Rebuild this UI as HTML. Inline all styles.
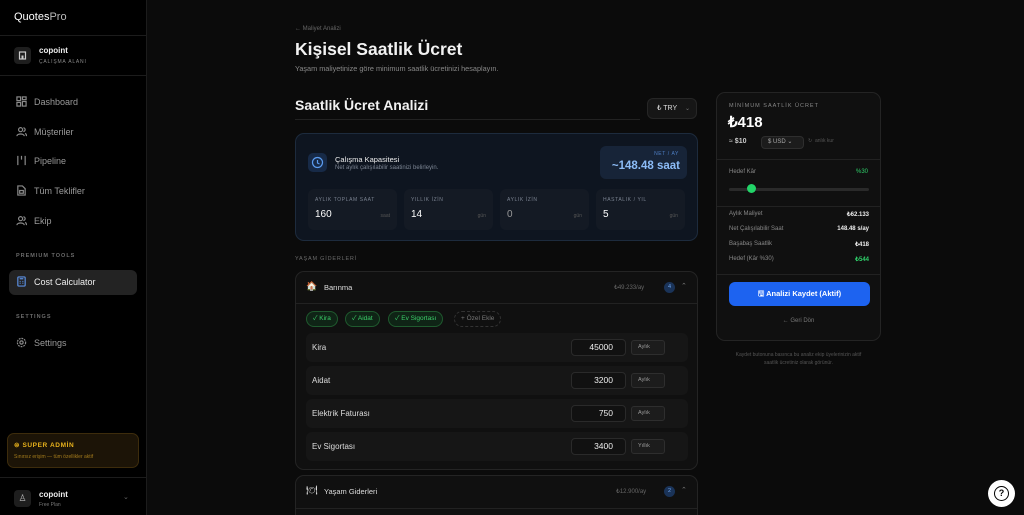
<!DOCTYPE html>
<html style="width:1024px;height:515px;overflow:hidden"><head><meta charset="utf-8"><style>
*{box-sizing:border-box;margin:0;padding:0}
body{width:1024px;height:515px;overflow:hidden;background:#0b0b0b;font-family:"Liberation Sans","Noto Sans CJK JP",sans-serif;color:#e5e5e5;position:relative}
.a{position:absolute}
.sb{left:0;top:0;width:147px;height:515px;background:#000;border-right:1px solid #1c1c1c}
.hr{position:absolute;height:1px;background:#1c1c1c}
.nav{position:absolute;left:16px;font-size:9px;color:#9a9a9a;display:flex;align-items:center}
.nav svg{width:11px;height:11px;margin-right:7px;stroke:#8a8a8a;fill:none;stroke-width:1.3}
.sec{position:absolute;left:16px;font-size:5.5px;letter-spacing:1px;color:#6a6a6a;font-weight:bold}
.card{position:absolute;border-radius:9px}
.lbl{font-size:5px;letter-spacing:.6px;color:#7a8290}
.box{position:absolute;top:55px;width:89px;height:41px;background:#141a24;border-radius:6px}
.row{position:absolute;left:10px;width:382px;height:29px;background:#161616;border-radius:6px;font-size:8px;color:#ddd}
.inp{position:absolute;left:265px;top:6px;width:55px;height:17px;border:1px solid #2a2a2a;background:#111;border-radius:4px;text-align:right;padding-right:12px;font-size:8.5px;line-height:15px;color:#eee}
.per{position:absolute;left:325px;top:7px;width:34px;height:15px;border:1px solid #2e2e2e;background:#1c1c1c;border-radius:3px;font-size:5.5px;color:#999;padding-left:6px;line-height:13px}
.chip{position:absolute;top:8px;height:16px;border:1px solid #1f5a2e;background:#0f2416;border-radius:8px;font-size:6.5px;color:#3ccf6a;line-height:14px;padding:0 6px}
.kv{position:absolute;left:12px;width:140px;font-size:6px;color:#888;display:flex;justify-content:space-between}
.kv b{color:#eee}
</style></head><body>
<div class="a sb">
 <div class="a" style="left:14px;top:11px;font-size:11px;color:#fff">Quotes<span style="color:#bbb">Pro</span></div>
 <div class="hr" style="left:0;top:35px;width:146px"></div>
 <div class="a" style="left:14px;top:47px;width:17px;height:17px;background:#1e1e1e;border-radius:4px"><svg width="17" height="17" viewBox="0 0 17 17"><rect x="5.5" y="5" width="6" height="7" fill="none" stroke="#ccc" stroke-width="1.2"/><rect x="7.5" y="8.5" width="2" height="3.5" fill="#ccc"/></svg></div>
 <div class="a" style="left:39px;top:46px;font-size:8px;color:#eee;font-weight:bold">copoint</div>
 <div class="a" style="left:39px;top:59px;font-size:5px;color:#888;letter-spacing:.8px">ÇALIŞMA ALANI</div>
 <div class="hr" style="left:0;top:75px;width:146px"></div>
 <div class="nav" style="top:96px"><svg viewBox="0 0 12 12"><rect x="1" y="1" width="4" height="4"/><rect x="7" y="1" width="4" height="3"/><rect x="1" y="7" width="4" height="4"/><rect x="7" y="6" width="4" height="5"/></svg>Dashboard</div>
 <div class="nav" style="top:126px"><svg viewBox="0 0 12 12"><circle cx="5" cy="4" r="2.2"/><path d="M1 11c0-3 8-3 8 0M8 2a2 2 0 010 4M10 8c1 .5 1.5 1.5 1.5 3"/></svg>Müşteriler</div>
 <div class="nav" style="top:155px"><svg viewBox="0 0 12 12"><path d="M2 1v10M6 1v4M10 1v10"/></svg>Pipeline</div>
 <div class="nav" style="top:185px"><svg viewBox="0 0 12 12"><path d="M2 1h5l3 3v7H2z"/><rect x="4" y="6" width="4" height="3"/></svg>Tüm Teklifler</div>
 <div class="nav" style="top:215px"><svg viewBox="0 0 12 12"><circle cx="5" cy="4" r="2.2"/><path d="M1 11c0-3 8-3 8 0M8 2a2 2 0 010 4M10 8c1 .5 1.5 1.5 1.5 3"/></svg>Ekip</div>
 <div class="sec" style="top:253px">PREMIUM TOOLS</div>
 <div class="a" style="left:9px;top:270px;width:128px;height:25px;background:#232323;border-radius:6px"></div>
 <div class="nav" style="top:276px;color:#eee"><svg viewBox="0 0 12 12" style="stroke:#5b8fe0"><rect x="2" y="1" width="8" height="10" rx="1"/><path d="M4 3h4M4 6h1M7 6h1M4 8h1M7 8h1"/></svg>Cost Calculator</div>
 <div class="sec" style="top:314px">SETTINGS</div>
 <div class="nav" style="top:337px"><svg viewBox="0 0 12 12"><circle cx="6" cy="6" r="1.8"/><circle cx="6" cy="6" r="4.5" stroke-dasharray="2 1"/></svg>Settings</div>
 <div class="a" style="left:7px;top:433px;width:132px;height:35px;background:#1c1407;border:1px solid #3d2c0c;border-radius:7px">
  <div class="a" style="left:6px;top:7px;font-size:6.5px;font-weight:bold;color:#e8b21c;letter-spacing:.6px">⊜ SUPER ADMİN</div>
  <div class="a" style="left:6px;top:20px;font-size:5px;color:#a37b1c">Sınırsız erişim — tüm özellikler aktif</div>
 </div>
 <div class="hr" style="left:0;top:477px;width:146px"></div>
 <div class="a" style="left:14px;top:490px;width:17px;height:17px;background:#1e1e1e;border-radius:4px;color:#bbb;font-size:9px;text-align:center;line-height:17px">♙</div>
 <div class="a" style="left:39px;top:490px;font-size:8px;color:#eee;font-weight:bold">copoint</div>
 <div class="a" style="left:39px;top:502px;font-size:5px;color:#777">Free Plan</div>
 <div class="a" style="left:123px;top:493px;font-size:7px;color:#666">⌄</div>
</div>

<div class="a" style="left:295px;top:26px;font-size:6px;color:#666">← Maliyet Analizi</div>
<div class="a" style="left:295px;top:39px;font-size:17.5px;font-weight:bold;color:#f2f2f2">Kişisel Saatlik Ücret</div>
<div class="a" style="left:295px;top:64px;font-size:7.3px;color:#888">Yaşam maliyetinize göre minimum saatlik ücretinizi hesaplayın.</div>
<div class="a" style="left:295px;top:97px;font-size:14px;font-weight:bold;color:#f2f2f2">Saatlik Ücret Analizi</div>
<div class="hr" style="left:295px;top:119px;width:345px;background:#222"></div>
<div class="a" style="left:647px;top:98px;width:50px;height:21px;background:#161616;border:1px solid #262626;border-radius:6px;font-size:7px;color:#ddd;line-height:19px;padding-left:9px">₺ TRY <span style="color:#777;margin-left:6px;font-size:6px">⌄</span></div>

<div class="card" style="left:295px;top:133px;width:403px;height:108px;background:#0e1520;border:1px solid #1d2b3d">
 <div class="a" style="left:12px;top:19px;width:19px;height:19px;background:#172a47;border-radius:5px"><svg width="19" height="19" viewBox="0 0 19 19"><circle cx="9.5" cy="9.5" r="5" fill="none" stroke="#5b9cf0" stroke-width="1.2"/><path d="M9.5 7v3l2 1" fill="none" stroke="#5b9cf0" stroke-width="1.2"/></svg></div>
 <div class="a" style="left:39px;top:21px;font-size:7.5px;color:#eee">Çalışma Kapasitesi</div>
 <div class="a" style="left:39px;top:31px;font-size:6px;color:#7c8593">Net aylık çalışılabilir saatinizi belirleyin.</div>
 <div class="a" style="left:304px;top:12px;width:87px;height:33px;background:#172438;border-radius:6px">
  <div class="a lbl" style="right:8px;top:5px;color:#4d7ec4">NET / AY</div>
  <div class="a" style="right:7px;top:14px;font-size:11.5px;font-weight:bold;color:#8cbcf7">~148.48 saat</div>
 </div>
 <div class="box" style="left:12px"><div class="a lbl" style="left:7px;top:8px">AYLIK TOPLAM SAAT</div><div class="a" style="left:7px;top:20px;font-size:10px;color:#fff">160</div><div class="a" style="right:7px;top:24px;font-size:5px;color:#555">saat</div></div>
 <div class="box" style="left:108px"><div class="a lbl" style="left:7px;top:8px">YILLIK İZİN</div><div class="a" style="left:7px;top:20px;font-size:10px;color:#fff">14</div><div class="a" style="right:7px;top:24px;font-size:5px;color:#555">gün</div></div>
 <div class="box" style="left:204px"><div class="a lbl" style="left:7px;top:8px">AYLIK İZİN</div><div class="a" style="left:7px;top:20px;font-size:10px;color:#999">0</div><div class="a" style="right:7px;top:24px;font-size:5px;color:#555">gün</div></div>
 <div class="box" style="left:300px"><div class="a lbl" style="left:7px;top:8px">HASTALIK / YIL</div><div class="a" style="left:7px;top:20px;font-size:10px;color:#fff">5</div><div class="a" style="right:7px;top:24px;font-size:5px;color:#555">gün</div></div>
</div>

<div class="a" style="left:295px;top:256px;font-size:5.5px;color:#6a6a6a;letter-spacing:.8px">YAŞAM GİDERLERİ</div>

<div class="card" style="left:295px;top:271px;width:403px;height:199px;background:#101010;border:1px solid #242424">
 <div class="a" style="left:10px;top:9px;font-size:9px">🏠</div>
 <div class="a" style="left:28px;top:11px;font-size:7.5px;color:#ddd">Barınma</div>
 <div class="a" style="left:318px;top:12px;font-size:6px;color:#666">₺49.233/ay</div>
 <div class="a" style="left:368px;top:10px;width:11px;height:11px;border-radius:50%;background:#1a3358;color:#6ea3ea;font-size:5.5px;text-align:center;line-height:11px">4</div>
 <div class="a" style="left:385px;top:10px;font-size:7px;color:#777">⌃</div>
 <div class="hr" style="left:0;top:31px;width:401px;background:#222"></div>
 <div style="position:absolute;left:0;top:31px;width:401px">
  <div class="chip" style="left:10px">✓ Kira</div>
  <div class="chip" style="left:49px">✓ Aidat</div>
  <div class="chip" style="left:92px">✓ Ev Sigortası</div>
  <div class="chip" style="left:158px;border:1px dashed #333;background:none;color:#777">+ Özel Ekle</div>
 </div>
 <div class="row" style="top:61px"><span class="a" style="left:6px;top:10px">Kira</span><div class="inp">45000</div><div class="per">Aylık</div></div>
 <div class="row" style="top:94px"><span class="a" style="left:6px;top:10px">Aidat</span><div class="inp">3200</div><div class="per">Aylık</div></div>
 <div class="row" style="top:127px"><span class="a" style="left:6px;top:10px">Elektrik Faturası</span><div class="inp">750</div><div class="per">Aylık</div></div>
 <div class="row" style="top:160px"><span class="a" style="left:6px;top:10px">Ev Sigortası</span><div class="inp">3400</div><div class="per">Yıllık</div></div>
</div>

<div class="card" style="left:295px;top:475px;width:403px;height:40px;background:#101010;border:1px solid #242424;border-bottom:none;border-radius:9px 9px 0 0">
 <div class="a" style="left:10px;top:9px;font-size:9px;color:#eee">🍽</div>
 <div class="a" style="left:28px;top:11px;font-size:7.5px;color:#ddd">Yaşam Giderleri</div>
 <div class="a" style="left:320px;top:12px;font-size:6px;color:#666">₺12.900/ay</div>
 <div class="a" style="left:368px;top:10px;width:11px;height:11px;border-radius:50%;background:#1a3358;color:#6ea3ea;font-size:5.5px;text-align:center;line-height:11px">2</div>
 <div class="a" style="left:385px;top:10px;font-size:7px;color:#777">⌃</div>
 <div class="hr" style="left:0;top:32px;width:401px;background:#222"></div>
</div>

<div class="card" style="left:716px;top:92px;width:165px;height:249px;background:#101010;border:1px solid #242424">
 <div class="a" style="left:12px;top:10px;font-size:5.5px;letter-spacing:1px;color:#888">MİNİMUM SAATLİK ÜCRET</div>
 <div class="a" style="left:11px;top:20px;font-size:15px;font-weight:bold;color:#fff">₺418</div>
 <div class="a" style="left:12px;top:45px;font-size:7px;color:#ccc">≈ <b>$10</b></div>
 <div class="a" style="left:44px;top:43px;width:43px;height:13px;background:#1c1c1c;border:1px solid #2e2e2e;border-radius:4px;font-size:6px;color:#aaa;line-height:11px;padding-left:6px">$ USD ⌄</div>
 <div class="a" style="left:91px;top:45px;font-size:5px;color:#555">↻ &nbsp;anlık kur</div>
 <div class="hr" style="left:0;top:66px;width:163px;background:#222"></div>
 <div class="a" style="left:12px;top:76px;font-size:6px;color:#888">Hedef Kâr</div>
 <div class="a" style="right:12px;top:76px;font-size:6px;color:#2fd26b">%30</div>
 <div class="a" style="left:12px;top:95px;width:140px;height:3px;background:#2a2a2a;border-radius:2px"></div>
 <div class="a" style="left:30px;top:91px;width:9px;height:9px;border-radius:50%;background:#22d468"></div>
 <div class="hr" style="left:0;top:113px;width:163px;background:#222"></div>
 <div class="kv" style="top:118px"><span>Aylık Maliyet</span><b>₺62.133</b></div>
 <div class="kv" style="top:133px"><span>Net Çalışılabilir Saat</span><b>148.48 s/ay</b></div>
 <div class="kv" style="top:148px"><span>Başabaş Saatlik</span><b>₺418</b></div>
 <div class="kv" style="top:163px"><span>Hedef (Kâr %30)</span><b style="color:#2fd26b">₺544</b></div>
 <div class="hr" style="left:0;top:181px;width:163px;background:#222"></div>
 <div class="a" style="left:12px;top:189px;width:141px;height:24px;background:#1d63f0;border-radius:6px;font-size:7.5px;font-weight:bold;color:#fff;text-align:center;line-height:24px">🖫 Analizi Kaydet (Aktif)</div>
 <div class="a" style="left:0;width:163px;top:225px;text-align:center;font-size:6px;color:#777">← Geri Dön</div>
</div>
<div class="a" style="left:716px;top:351px;width:165px;text-align:center;font-size:5px;color:#555;line-height:8px">Kaydet butonuna basınca bu analiz ekip üyelerinizin aktif<br>saatlik ücretiniz olarak görünür.</div>

<div class="a" style="left:988px;top:480px;width:27px;height:27px;border-radius:50%;background:#fff"><div class="a" style="left:6px;top:6px;width:15px;height:15px;border:1.5px solid #000;border-radius:50%;font-size:9px;font-weight:bold;color:#000;text-align:center;line-height:12px">?</div></div>
</body></html>
